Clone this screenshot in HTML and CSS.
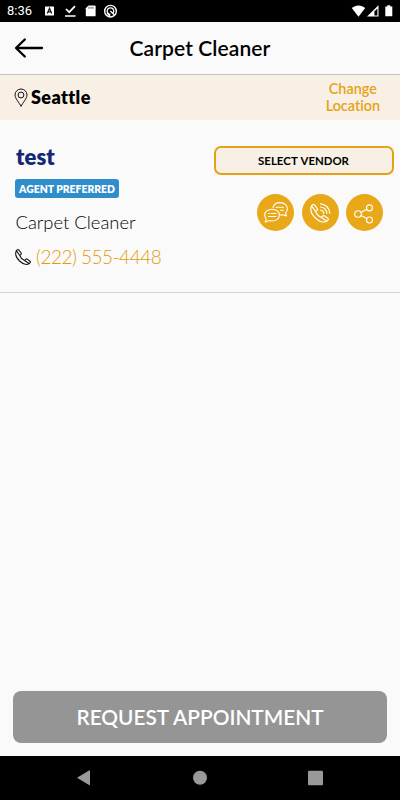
FILE: index.html
```html
<!DOCTYPE html>
<html lang="en">
<head>
<meta charset="utf-8">
<meta name="viewport" content="width=device-width, initial-scale=1">
<title>Carpet Cleaner</title>
<link rel="stylesheet" href="styles.css">
</head>
<body>
<svg class="defs" aria-hidden="true">
  <symbol id="phone" viewBox="0 0 24 24">
    <path d="M5.600 1.400C4.900.7 4 .7 3.200 1.400L1.800 2.800C-.3 8.500 3 14.500 6.800 18c3.900 3.700 9.400 6.500 14.200 4.200l1.600-1.600c.7-.8.7-1.700-.1-2.300l-4.300-3.100c-.7-.5-1.500-.4-2.100.2l-1.700 1.900c-3.200-1.300-6.200-4.400-7.300-7.500l1.800-1.700c.7-.6.8-1.400.3-2.100ZM2.500 3.200l4.600 6.600M14.400 17.300l6.400 4.400"/>
  </symbol>
</svg>
<div class="screen">
  <div class="status">
    <span class="time">8:36</span>
    <svg class="notices" width="75" height="14" viewBox="0 0 75 14">
      <rect x="1" y="2.500" width="9" height="9" rx=".6" fill="#fff"/>
      <path d="m3.300 9.500 2.200-5.200 2.200 5.200M4.200 7.800h2.600" fill="none" stroke="#111" stroke-width="1.200"/>
      <path d="m22 5 3.200 3.200L31 2.200M21 12h10.500" fill="none" stroke="#fff" stroke-width="1.700"/>
      <path d="M44.500 1.500h6.200q.9 0 .9.900v9q0 .9-.9.900h-8q-.9 0-.9-.9V4.300Z" fill="#fff"/>
      <path d="M45 2.800v2M47 2.800v2M49 2.800v2" stroke="#333" stroke-width=".8"/>
      <g fill="none" stroke="#fff"><circle cx="66.500" cy="7.200" r="5.800" stroke-width="1.400"/><path d="M69 9.200a3.300 3.300 0 1 0-2.600 1.200M66.300 7l4.200 4M63 8.800l3 3.400" stroke-width="1.300"/></g>
    </svg>
    <svg class="signals" width="44" height="14" viewBox="0 0 44 14">
      <path d="M1.800 4C5.600.6 11.400.6 15.200 4L8.500 12.800Z" fill="#fff"/>
      <path d="M28.500 1.300v11.200H17Z" fill="#fff"/><path d="M27.400 4.500v7h-3V7.400Z" fill="#000"/>
      <path d="M35.300 2.500h2V1.300h3v1.200h2v9.800h-7Z" fill="#fff"/>
    </svg>
  </div>
  <header class="header">
    <svg class="back" width="30" height="22" viewBox="0 0 30 22"><path d="M28 11H2.500M10.800 2.500 2 11l8.800 8.500" fill="none" stroke="#000" stroke-width="2.300" stroke-linecap="round" stroke-linejoin="round"/></svg>
    <h1>Carpet Cleaner</h1>
  </header>
  <div class="location">
    <svg width="14" height="20" viewBox="0 0 14 20" fill="none" stroke="#111"><path d="M7 18.400C5.500 15 1 10.500 1 7a6 6 0 0 1 12 0c0 3.500-4.500 8-6 11.400Z"/><circle cx="7" cy="7" r="2.900"/></svg>
    <strong>Seattle</strong>
    <a class="change">Change<br>Location</a>
  </div>
  <main class="vendor">
    <div class="info">
      <h2>test</h2>
      <span class="badge">AGENT PREFERRED</span>
      <p class="service">Carpet Cleaner</p>
      <p class="tel"><svg width="16" height="16" class="dark"><use href="#phone"/></svg><span>(222) 555-4448</span></p>
    </div>
    <div class="side">
      <button class="select">SELECT VENDOR</button>
      <div class="actions">
        <a class="round"><svg width="37" height="37" viewBox="0 0 37 37">
          <path d="M16 13.500C16.800 10.500 19.600 8.600 23 8.600c4.400 0 7.400 2.600 7.400 6 0 1.700-.7 3.200-1.900 4.300l1 3-4-1.200c-.8.200-1.600.3-2.500.3"/>
          <path d="M15 15.200c4.300 0 7.400 2.500 7.400 5.900S19.300 27 15 27c-1 0-1.900-.1-2.700-.4l-4 1.500.9-3.400c-1.100-1.100-1.500-2.100-1.500-3.600 0-3.400 3-5.900 7.300-5.900Z"/>
          <path d="M11.500 19.500h.8M14 19.500h5M11.500 22.500h7.500M19 13.200h7.500M23.500 16.200h3"/>
        </svg></a>
        <a class="round"><svg width="37" height="37" viewBox="0 0 37 37">
          <use href="#phone" x="8" y="9.800" width="19" height="19" stroke-width="1.500"/>
          <path d="M18.500 16c1.900.3 3 1.400 3.300 3.300M18.500 13c3.600.3 6 2.700 6.300 6.300M18.500 9.800c5.300.4 9 4.200 9.300 9.500" stroke-width="1.200"/>
        </svg></a>
        <a class="round"><svg width="37" height="37" viewBox="0 0 37 37">
          <circle cx="12" cy="20" r="3.300"/><circle cx="23.500" cy="13.900" r="3"/><circle cx="23.500" cy="26" r="3"/><path d="m15 18.400 5.800-3.100M15 21.600l5.800 3"/>
        </svg></a>
      </div>
    </div>
  </main>
  <footer class="footer"><button class="request">REQUEST APPOINTMENT</button></footer>
  <nav class="nav">
    <svg width="400" height="44" viewBox="0 0 400 44" fill="#999"><path d="M77 21.800 89 14.500q1-.5 1 .5v13.500q0 1-1 .5Z"/><circle cx="200" cy="21.800" r="7"/><rect x="308" y="14.800" width="15" height="14.400" rx="1"/></svg>
  </nav>
</div>
</body>
</html>
```
FILE: styles.css
```css
* { box-sizing: border-box; }
body { margin: 0; background: #fafafa; color: #000; font-family: Lato, "Liberation Sans", sans-serif; font-variant-ligatures: none; }
h1, h2, p { margin: 0; }
svg { display: block; flex: none; }
button { font-family: inherit; padding: 0; }
.defs { position: absolute; width: 0; height: 0; }
.screen { display: flex; flex-direction: column; width: 400px; height: 800px; }
.status { display: flex; align-items: center; height: 22px; padding: 0 6px 0 7px; background: #000; color: #fff; }
.time { width: 37px; font: 13px/24px Roboto, sans-serif; }
.signals { margin-left: auto; }
.header { display: grid; grid-template-columns: 60px 1fr 60px; align-items: center; height: 53px; border-bottom: 1px solid #cbc3b9; }
.back { margin-left: 14px; margin-top: -1px; }
h1 { font-size: 21px; line-height: 26px; font-weight: 600; letter-spacing: .1px; text-align: center; white-space: nowrap; }
.location { display: flex; align-items: center; height: 45px; padding: 0 20px 0 14px; background: #f9f0e5; }
.location strong { margin: -1px 0 0 3px; font-size: 18px; line-height: 22px; font-weight: 800; letter-spacing: .38px; }
.change { margin: -2px 0 0 auto; color: #e6a216; font-size: 14.400px; line-height: 17px; font-weight: 600; text-align: center; }
.vendor { display: flex; justify-content: space-between; height: 173px; padding: 23px 6.500px 0 15px; border-bottom: 1px solid #d2d2d2; }
.info { display: flex; flex-direction: column; align-items: flex-start; }
h2 { margin-left: 1px; color: #152875; font-size: 22px; line-height: 28px; font-weight: 800; letter-spacing: .1px; }
.badge { width: 104px; height: 19px; margin-top: 8px; border-radius: 3px; background: #308dcc; color: #fff; font-size: 10.400px; line-height: 20px; font-weight: 800; text-align: center; white-space: nowrap; }
.service { margin: 11px 0 0 .5px; font-size: 18.400px; line-height: 26px; font-weight: 300; }
.tel { display: flex; align-items: center; gap: 5px; margin-top: 9px; color: #e39a08; font-size: 19px; line-height: 26px; font-weight: 300; letter-spacing: -.5px; }
.dark { fill: none; stroke: #111; stroke-width: 1.600; }
.side { width: 180px; padding-top: 3px; }
.select { display: block; width: 180px; height: 29px; border: 2px solid #e6a216; border-radius: 7px; background: #f9f0e5; color: #000; font-size: 11.400px; font-weight: 700; font-kerning: none; }
.actions { display: flex; justify-content: flex-end; gap: 7.500px; padding-right: 10.500px; margin-top: 19px; }
.round { width: 37px; height: 37px; border-radius: 50%; background: #e8a817; }
.round svg { fill: none; stroke: #fff; stroke-width: 1.100; stroke-linecap: round; stroke-linejoin: round; }
.footer { margin-top: auto; padding: 0 13px 13px; }
.request { display: block; width: 100%; height: 52px; padding-bottom: 2px; border: 0; border-radius: 8px; background: #959595; color: #fff; font-size: 20.800px; font-weight: 600; }
.nav { height: 44px; background: #000; }
```
